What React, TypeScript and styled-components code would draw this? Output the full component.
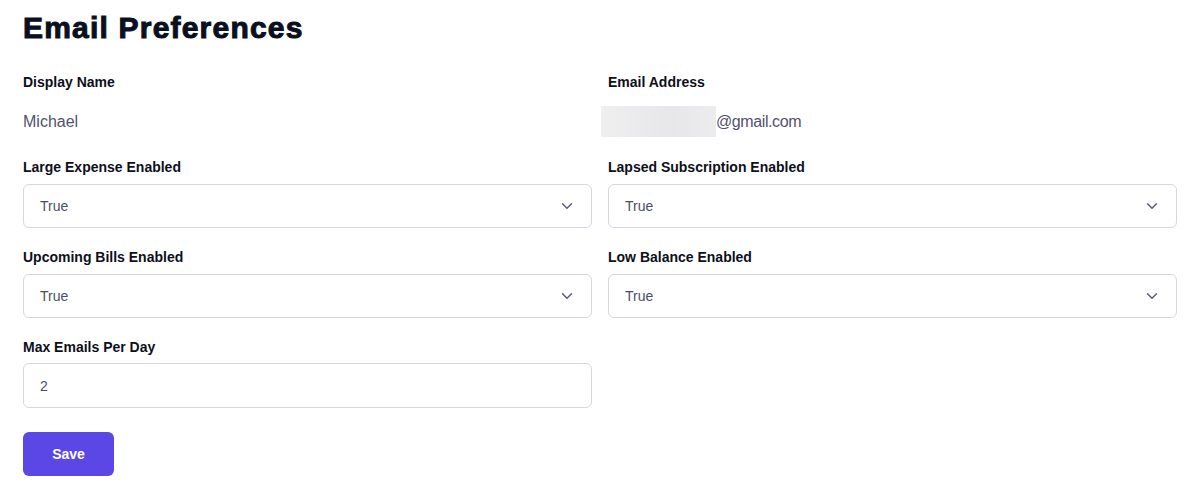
import React from 'react';
import styled, { createGlobalStyle } from 'styled-components';

const GlobalStyle = createGlobalStyle`
	body {
		margin: 0;
		background: #ffffff;
		font-family: 'Liberation Sans', Arial, sans-serif;
	}
`;

const Page = styled.div`
	padding: 11px 25px 0 23px;
`;

const Title = styled.h1`
	margin: 0 0 29px;
	font-size: 30px;
	line-height: 34px;
	font-weight: 700;
	color: #0b1020;
	-webkit-text-stroke: 1px #0b1020;
	letter-spacing: 1.2px;
`;

const Form = styled.div`
	display: grid;
	grid-template-columns: 569px 569px;
	column-gap: 16px;
	row-gap: 21px;
`;

const Field = styled.div<{ $tight?: boolean }>`
	display: flex;
	flex-direction: column;
	gap: ${(p) => (p.$tight ? '8px' : '9px')};
`;

const Label = styled.label`
	font-size: 14px;
	line-height: 16px;
	font-weight: 700;
	color: #0d0f1a;
`;

const Value = styled.div`
	display: flex;
	align-items: center;
	height: 31px;
	margin-top: 7px;
	margin-bottom: 1px;
	font-size: 16px;
	color: #52526e;
`;

const Hidden = styled.span`
	display: inline-block;
	width: 115px;
	height: 31px;
	margin-left: -7px;
	background: linear-gradient(90deg, #efeff0 0%, #e7e7ea 60%, #ececee 100%);
`;

const EmailDomain = styled.span`
	letter-spacing: -0.4px;
`;

const Box = styled.div<{ $tall?: boolean }>`
	box-sizing: border-box;
	display: flex;
	align-items: center;
	justify-content: space-between;
	height: ${(p) => (p.$tall ? '45px' : '44px')};
	padding: 0 15px 0 16px;
	border: 1px solid #d6d6e3;
	border-radius: 6px;
	font-size: 14px;
	color: #4b4f66;
	background: #fff;
`;

const Chevron = () => (
	<svg width='18' height='18' viewBox='0 0 24 24' fill='none' stroke='#5b5f75' strokeWidth='2' strokeLinecap='round' strokeLinejoin='round'>
		<path d='M6 9l6 6 6-6' />
	</svg>
);

const SaveButton = styled.button`
	margin-top: 24px;
	width: 91px;
	height: 44px;
	border: none;
	border-radius: 6px;
	background: #5b47e6;
	color: #fff;
	font-family: inherit;
	font-size: 14px;
	font-weight: 700;
	cursor: pointer;
`;

const selects = [
	{ id: '1', label: 'Large Expense Enabled', value: 'True' },
	{ id: '2', label: 'Lapsed Subscription Enabled', value: 'True' },
	{ id: '3', label: 'Upcoming Bills Enabled', value: 'True' },
	{ id: '4', label: 'Low Balance Enabled', value: 'True' },
];

export default function App() {
	return (
		<Page>
			<GlobalStyle />
			<Title>Email Preferences</Title>
			<Form>
				<Field>
					<Label>Display Name</Label>
					<Value>Michael</Value>
				</Field>
				<Field>
					<Label>Email Address</Label>
					<Value>
						<Hidden />
						<EmailDomain>@gmail.com</EmailDomain>
					</Value>
				</Field>
				{selects.map((el) => (
					<Field key={el.id}>
						<Label>{el.label}</Label>
						<Box>
							{el.value}
							<Chevron />
						</Box>
					</Field>
				))}
				<Field $tight>
					<Label>Max Emails Per Day</Label>
					<Box $tall>2</Box>
				</Field>
			</Form>
			<SaveButton>Save</SaveButton>
		</Page>
	);
}
